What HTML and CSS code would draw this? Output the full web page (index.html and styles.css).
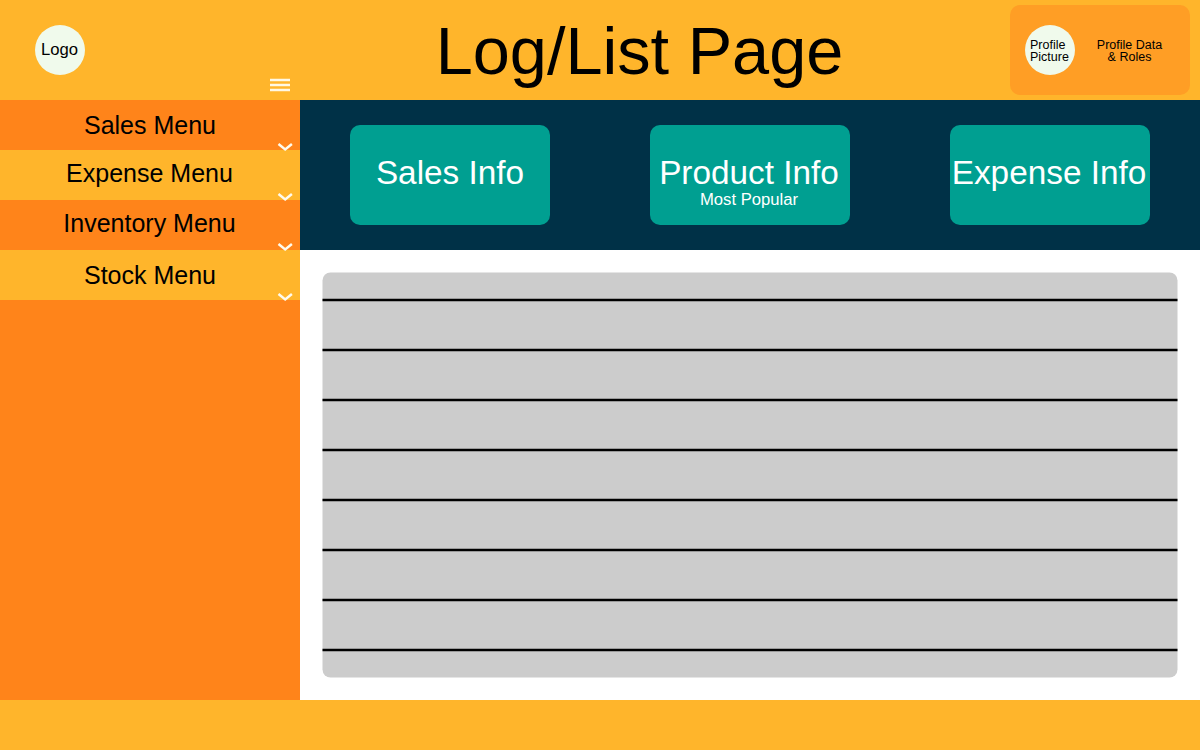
FILE: index.html
```html
<!DOCTYPE html>
<html lang="en">
<head>
<meta charset="utf-8">
<title>Log/List Page</title>
<link rel="stylesheet" href="styles.css">
</head>
<body>
<div class="page">
  <header class="header">
    <div class="brand">
      <div class="circle logo">Logo</div>
      <svg class="burger" width="20" height="14" viewBox="0 0 20 14"><path d="M0 2H20M0 7H20M0 12H20" stroke="#fff8e4" stroke-width="2.3"/></svg>
    </div>
    <h1 class="title">Log/List Page</h1>
    <div class="profile">
      <div class="circle picture">Profile<br>Picture</div>
      <div class="roles">Profile Data<br>&amp; Roles</div>
    </div>
  </header>
  <div class="body">
    <nav class="sidebar">
      <a class="item">Sales Menu<svg class="chevron" width="16" height="9" viewBox="0 0 16 9"><path d="M1.5 1.1L8.2 6.4L14.9 1.1" fill="none" stroke="#fffbee" stroke-width="2.5"/></svg></a>
      <a class="item light raised">Expense Menu<svg class="chevron" width="16" height="9" viewBox="0 0 16 9"><path d="M1.5 1.1L8.2 6.4L14.9 1.1" fill="none" stroke="#fffbee" stroke-width="2.5"/></svg></a>
      <a class="item raised">Inventory Menu<svg class="chevron" width="16" height="9" viewBox="0 0 16 9"><path d="M1.5 1.1L8.2 6.4L14.9 1.1" fill="none" stroke="#fffbee" stroke-width="2.5"/></svg></a>
      <a class="item light">Stock Menu<svg class="chevron" width="16" height="9" viewBox="0 0 16 9"><path d="M1.5 1.1L8.2 6.4L14.9 1.1" fill="none" stroke="#fffbee" stroke-width="2.5"/></svg></a>
    </nav>
    <main class="main">
      <section class="cards">
        <div class="card"><div class="name">Sales Info</div></div>
        <div class="card wide"><div class="name">Product Info</div><div class="note">Most Popular</div></div>
        <div class="card wide"><div class="name">Expense Info</div></div>
      </section>
      <section class="content">
        <svg class="list" width="900" height="450" viewBox="0 0 900 450">
          <rect x="22.5" y="22.5" width="855" height="405" rx="8" fill="#ccc"/>
          <path d="M22.5 50H877.5M22.5 100H877.5M22.5 150H877.5M22.5 200H877.5M22.5 250H877.5M22.5 300H877.5M22.5 350H877.5M22.5 400H877.5" stroke="#000" stroke-width="2.4"/>
        </svg>
      </section>
    </main>
  </div>
  <footer class="footer"></footer>
</div>
</body>
</html>
```
FILE: styles.css
```css
* { box-sizing: border-box; }
body { margin: 0; font-family: "Liberation Sans", Arial, sans-serif; color: #000; }
.page { width: 1200px; height: 750px; display: flex; flex-direction: column; overflow: hidden; }
.header { height: 100px; display: flex; background: #ffb52b; }
.brand { width: 300px; display: flex; justify-content: space-between; padding: 25px 10px 0 35px; }
.circle { width: 50px; height: 50px; flex: none; border-radius: 50%; background: #f0faec; }
.logo { padding-right: 1px; font-size: 16.67px; line-height: 49px; text-align: center; white-space: nowrap; }
.burger { margin-top: 53px; }
.title { flex: 1; margin: 0; padding: 1px 31px 0 0; font-size: 66.67px; font-weight: 400; line-height: 101px; text-align: center; white-space: nowrap; }
.profile { width: 180px; height: 90px; margin: 5px 10px 5px 0; padding: 20px 15px; display: flex; border-radius: 10px; background: #ff9e25; }
.picture { padding: 14px 0 0 5px; font-size: 12.5px; line-height: 12px; }
.roles { width: 109px; flex: none; padding-top: 14px; font-size: 12.5px; line-height: 12px; text-align: center; }
.body { height: 600px; display: flex; }
.sidebar { width: 300px; background: #ff841a; }
.item { display: block; position: relative; height: 50px; font-size: 25px; line-height: 50px; text-align: center; background: #ff841a; }
.light { background: #ffb52b; }
.raised { padding-right: 1px; line-height: 47px; }
.chevron { position: absolute; right: 7px; bottom: -2px; z-index: 1; }
.main { width: 900px; background: #fff; }
.cards { height: 150px; padding: 25px 50px; display: flex; justify-content: space-between; background: #003147; }
.card { width: 200px; height: 100px; padding-top: 30px; border-radius: 10px; background: #009f91; color: #fff; text-align: center; white-space: nowrap; }
.wide { padding-right: 2px; }
.name { font-size: 33.33px; line-height: 35px; }
.note { font-size: 16.67px; line-height: 19px; }
.content { height: 450px; }
.list { display: block; }
.footer { height: 50px; background: #ffb52b; }
```
